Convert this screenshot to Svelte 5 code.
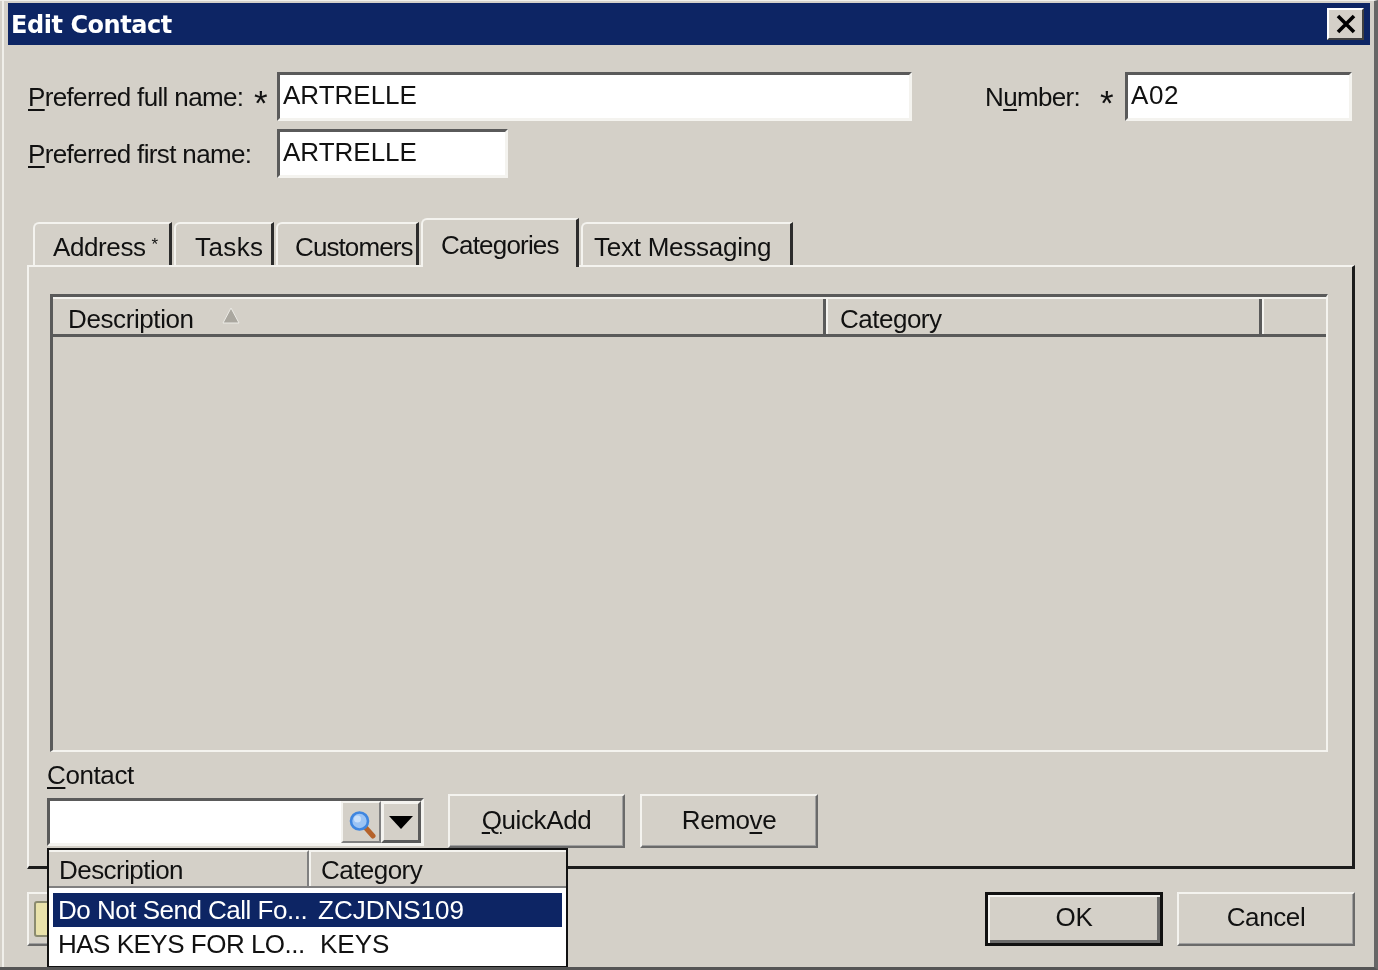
<script>
  const tabs = [
    { label: 'Address', sup: '*', w: 139, pad: 18, ls: -0.4 },
    { label: 'Tasks', w: 100, pad: 19, ls: 0.4 },
    { label: 'Customers', w: 143, pad: 17, ls: -0.9 },
    { label: 'Categories', w: 158, pad: 18, ls: -0.8, active: true },
    { label: 'Text Messaging', w: 212, pad: 11, ls: -0.25 }
  ];
</script>

<div class="window">
  <header class="title">
    <span>Edit Contact</span>
    <button class="close" aria-label="Close">
      <svg width="24" height="20" viewBox="0 0 24 20"><path d="M4 2 L20 18 M20 2 L4 18" stroke="#000" stroke-width="3.6" fill="none"/></svg>
    </button>
  </header>

  <div class="form">
    <div class="row">
      <label class="lab full"><u>P</u>referred full name:</label>
      <span class="star">*</span>
      <div class="input wide">ARTRELLE</div>
      <label class="lab num">N<u>u</u>mber:</label>
      <span class="star s2">*</span>
      <div class="input numi">A02</div>
    </div>
    <div class="row r2">
      <label class="lab first"><u>P</u>referred first name:</label>
      <div class="input short">ARTRELLE</div>
    </div>
  </div>

  <nav class="tabs">
    {#each tabs as t}
      <div class="tab" class:active={t.active} style="width:{t.w}px;padding-left:{t.pad}px;letter-spacing:{t.ls}px">{t.label}{#if t.sup}<sup>{t.sup}</sup>{/if}</div>
    {/each}
  </nav>

  <section class="panel">
    <div class="grid">
      <div class="ghead">
        <div class="gc c1">Description
          <svg class="sort" width="20" height="18" viewBox="0 0 20 18"><path d="M10 1 L18 16 H2 Z" fill="#aaa79f" stroke="#ecebe6" stroke-width="1"/></svg>
        </div>
        <div class="gc c2">Category</div>
        <div class="gc c3"></div>
      </div>
    </div>
    <div class="contact-label"><u>C</u>ontact</div>
    <div class="contact-row">
      <div class="combo">
        <div class="field"></div>
        <div class="search">
          <svg width="30" height="30" viewBox="0 0 30 30">
            <path d="M17 18 L25 27" stroke="#b5622a" stroke-width="5" stroke-linecap="round"/>
            <circle cx="11.5" cy="12" r="8.5" fill="#9cc4f5" stroke="#3f86e0" stroke-width="2.6"/>
            <circle cx="9.5" cy="10" r="3.5" fill="#c9e0fb"/>
          </svg>
        </div>
        <div class="drop"><span class="arrow"></span></div>
      </div>
      <button class="btn quick"><u>Q</u>uickAdd</button>
      <button class="btn remove">Remo<u>v</u>e</button>
    </div>
  </section>

  <footer class="footer">
    <button class="btn left" aria-label="Notes"><span class="folder"></span></button>
    <div class="right">
      <button class="btn ok">OK</button>
      <button class="btn cancel">Cancel</button>
    </div>
  </footer>

  <div class="popup">
    <div class="phead">
      <div class="pc p1">Description</div>
      <div class="pc p2">Category</div>
    </div>
    <div class="prow sel"><span class="d">Do Not Send Call Fo...</span><span class="k">ZCJDNS109</span></div>
    <div class="prow"><span class="d">HAS KEYS FOR LO...</span><span class="k k2">KEYS</span></div>
  </div>
</div>

<style>
  :global(body) { margin: 0; background: #d4d0c8; }
  * { box-sizing: border-box; }
  u { text-underline-offset: 3px; text-decoration-thickness: 2px; }
  .window {
    position: relative;
    width: 1378px;
    height: 970px;
    padding: 2px 4px 0 8px;
    background: linear-gradient(to right, #d4d0c8 2px, #f0efea 2px, #f0efea 4px, #d4d0c8 4px);
    font-family: "Liberation Sans", Arial, sans-serif;
    font-size: 26px;
    letter-spacing: -0.4px;
    color: #111;
    overflow: hidden;
    border-top: 1px solid #f0efea;
    border-right: 4px solid #666;
    border-bottom: 3px solid #555;
    filter: blur(0.6px);
  }
  .title {
    height: 42px;
    background: #0d2564;
    display: flex;
    align-items: center;
    justify-content: space-between;
    padding: 1px 3px 0;
    color: #fff;
    font-family: "DejaVu Sans", sans-serif;
    font-weight: 700;
    font-size: 24px;
    letter-spacing: -0.45px;
  }
  .close {
    width: 37px;
    height: 32px;
    margin: -1px 3px 0 0;
    padding: 0;
    display: flex;
    align-items: center;
    justify-content: center;
    background: #d4d0c8;
    border: 2px solid;
    border-color: #fff #404040 #404040 #fff;
  }
  .form { padding: 27px 14px 0 20px; }
  .row { display: flex; align-items: flex-start; height: 49px; }
  .r2 { margin-top: 8px; }
  .lab { line-height: 50px; white-space: nowrap; letter-spacing: -0.65px; }
  .full { width: 226px; }
  .first { width: 249px; }
  .star { width: 23px; line-height: 62px; font-size: 35px; letter-spacing: 0; }
  .input {
    height: 49px;
    background: #fff;
    border: 3px solid;
    border-color: #5a5a5a #f4f3ef #f4f3ef #5a5a5a;
    padding: 0 0 0 3px;
    line-height: 41px;
    color: #111;
    letter-spacing: 0;
  }
  .wide { width: 635px; }
  .short { width: 231px; }
  .num { margin-left: 73px; width: 115px; }
  .s2 { width: 25px; }
  .numi { width: 227px; letter-spacing: 0.6px; }

  .tabs { display: flex; align-items: flex-end; height: 48px; margin: 39px 0 0 25px; gap: 2px; position: relative; z-index: 1; }
  .tab {
    height: 43px;
    border-top: 2px solid #f4f3ef;
    border-left: 2px solid #f4f3ef;
    border-right: 3px solid #2c2c2c;
    border-top-left-radius: 6px;
    line-height: 46px;
    white-space: nowrap;
    position: relative;
  }
  .tab.active {
    height: 49px;
    margin-bottom: -2px;
    line-height: 50px;
    background: #d4d0c8;
  }
  .tab sup { font-size: 17px; vertical-align: 6px; line-height: 0; margin-left: 6px; }

  .panel {
    height: 604px;
    margin: 0 15px 0 19px;
    padding: 27px 24px 0 21px;
    border-top: 2px solid #f4f3ef;
    border-left: 2px solid #f4f3ef;
    border-right: 3px solid #1c1c1c;
    border-bottom: 3px solid #1c1c1c;
  }
  .grid {
    height: 458px;
    border: 3px solid;
    border-color: #5a5a5a #f4f3ef #f4f3ef #5a5a5a;
    border-width: 3px 2px 2px 3px;
  }
  .ghead { display: flex; height: 40px; border-bottom: 3px solid #5a5a5a; border-top: 2px solid #f4f3ef; }
  .gc { line-height: 41px; padding-left: 15px; white-space: nowrap; position: relative; }
  .c1 { width: 773px; border-right: 3px solid #5a5a5a; }
  .c2 { width: 436px; border-right: 3px solid #5a5a5a; border-left: 2px solid #f4f3ef; padding-left: 12px; letter-spacing: -0.5px; }
  .c3 { width: 63px; border-left: 2px solid #f4f3ef; }
  .sort { position: absolute; left: 168px; top: 8px; }
  .contact-label { margin-top: 5px; height: 41px; line-height: 36px; margin-left: -3px; }
  .contact-row { display: flex; align-items: flex-start; margin-top: -4px; margin-left: -3px; }
  .combo {
    margin-top: 4px;
    width: 377px;
    height: 48px;
    display: flex;
    border: 3px solid;
    border-color: #5a5a5a #f4f3ef #f4f3ef #5a5a5a;
    background: #d4d0c8;
  }
  .field { width: 291px; background: #fff; }
  .search {
    width: 40px;
    display: flex;
    align-items: center;
    justify-content: center;
    border: 2px solid;
    border-color: #f4f3ef #808080 #808080 #f4f3ef;
    padding-left: 3px;
    padding-top: 3px;
    background: #d4d0c8;
  }
  .drop {
    width: 40px;
    display: flex;
    align-items: center;
    justify-content: center;
    border: 3px solid;
    border-color: #f4f3ef #5a5a5a #5a5a5a #f4f3ef;
  }
  .arrow { width: 0; height: 0; border-left: 12px solid transparent; border-right: 12px solid transparent; border-top: 13px solid #000; }
  .btn {
    font: inherit;
    letter-spacing: inherit;
    color: #111;
    background: #d4d0c8;
    padding: 0 0 2px;
    border: 2px solid;
    border-color: #f4f3ef #6a6a6a #6a6a6a #f4f3ef;
    box-shadow: inset -1px -1px 0 #a0a0a0;
  }
  .quick { width: 177px; height: 54px; margin-left: 24px; }
  .remove { width: 178px; height: 54px; margin-left: 15px; }
  .footer { display: flex; justify-content: space-between; margin: 23px 15px 0 19px; }
  .left { width: 120px; height: 54px; position: relative; }
  .folder { position: absolute; left: 5px; top: 7px; width: 16px; height: 36px; background: #e9e2ab; border: 2px solid #8b8b70; border-radius: 3px; }
  .right { display: flex; gap: 14px; }
  .ok, .cancel { width: 178px; height: 54px; padding-bottom: 4px; }
  .ok { border: 3px solid #111; box-shadow: inset 2px 2px 0 #f4f3ef, inset -3px -3px 0 #6a6a6a; }
  .cancel { box-shadow: inset -1px -1px 0 #a0a0a0; }

  .popup {
    position: absolute;
    left: 47px;
    top: 847px;
    width: 521px;
    height: 120px;
    background: #fff;
    border: 2px solid #111;
  }
  .phead { display: flex; height: 38px; background: #d4d0c8; border-bottom: 2px solid #808080; letter-spacing: -0.55px; }
  .pc { line-height: 37px; padding-left: 10px; white-space: nowrap; border-top: 2px solid #f4f3ef; }
  .p1 { width: 260px; border-right: 2px solid #808080; }
  .p2 { flex: 1; padding-left: 10px; border-left: 2px solid #f4f3ef; }
  .prow { display: flex; height: 34px; line-height: 34px; margin: 0 4px; white-space: nowrap; color: #111; letter-spacing: 0; }
  .prow.sel { margin-top: 5px; background: #0d2564; color: #fff; }
  .d { width: 263px; padding-left: 5px; letter-spacing: -0.5px; }
  .k { padding-left: 2px; }
  .k2 { padding-left: 4px; }
</style>
